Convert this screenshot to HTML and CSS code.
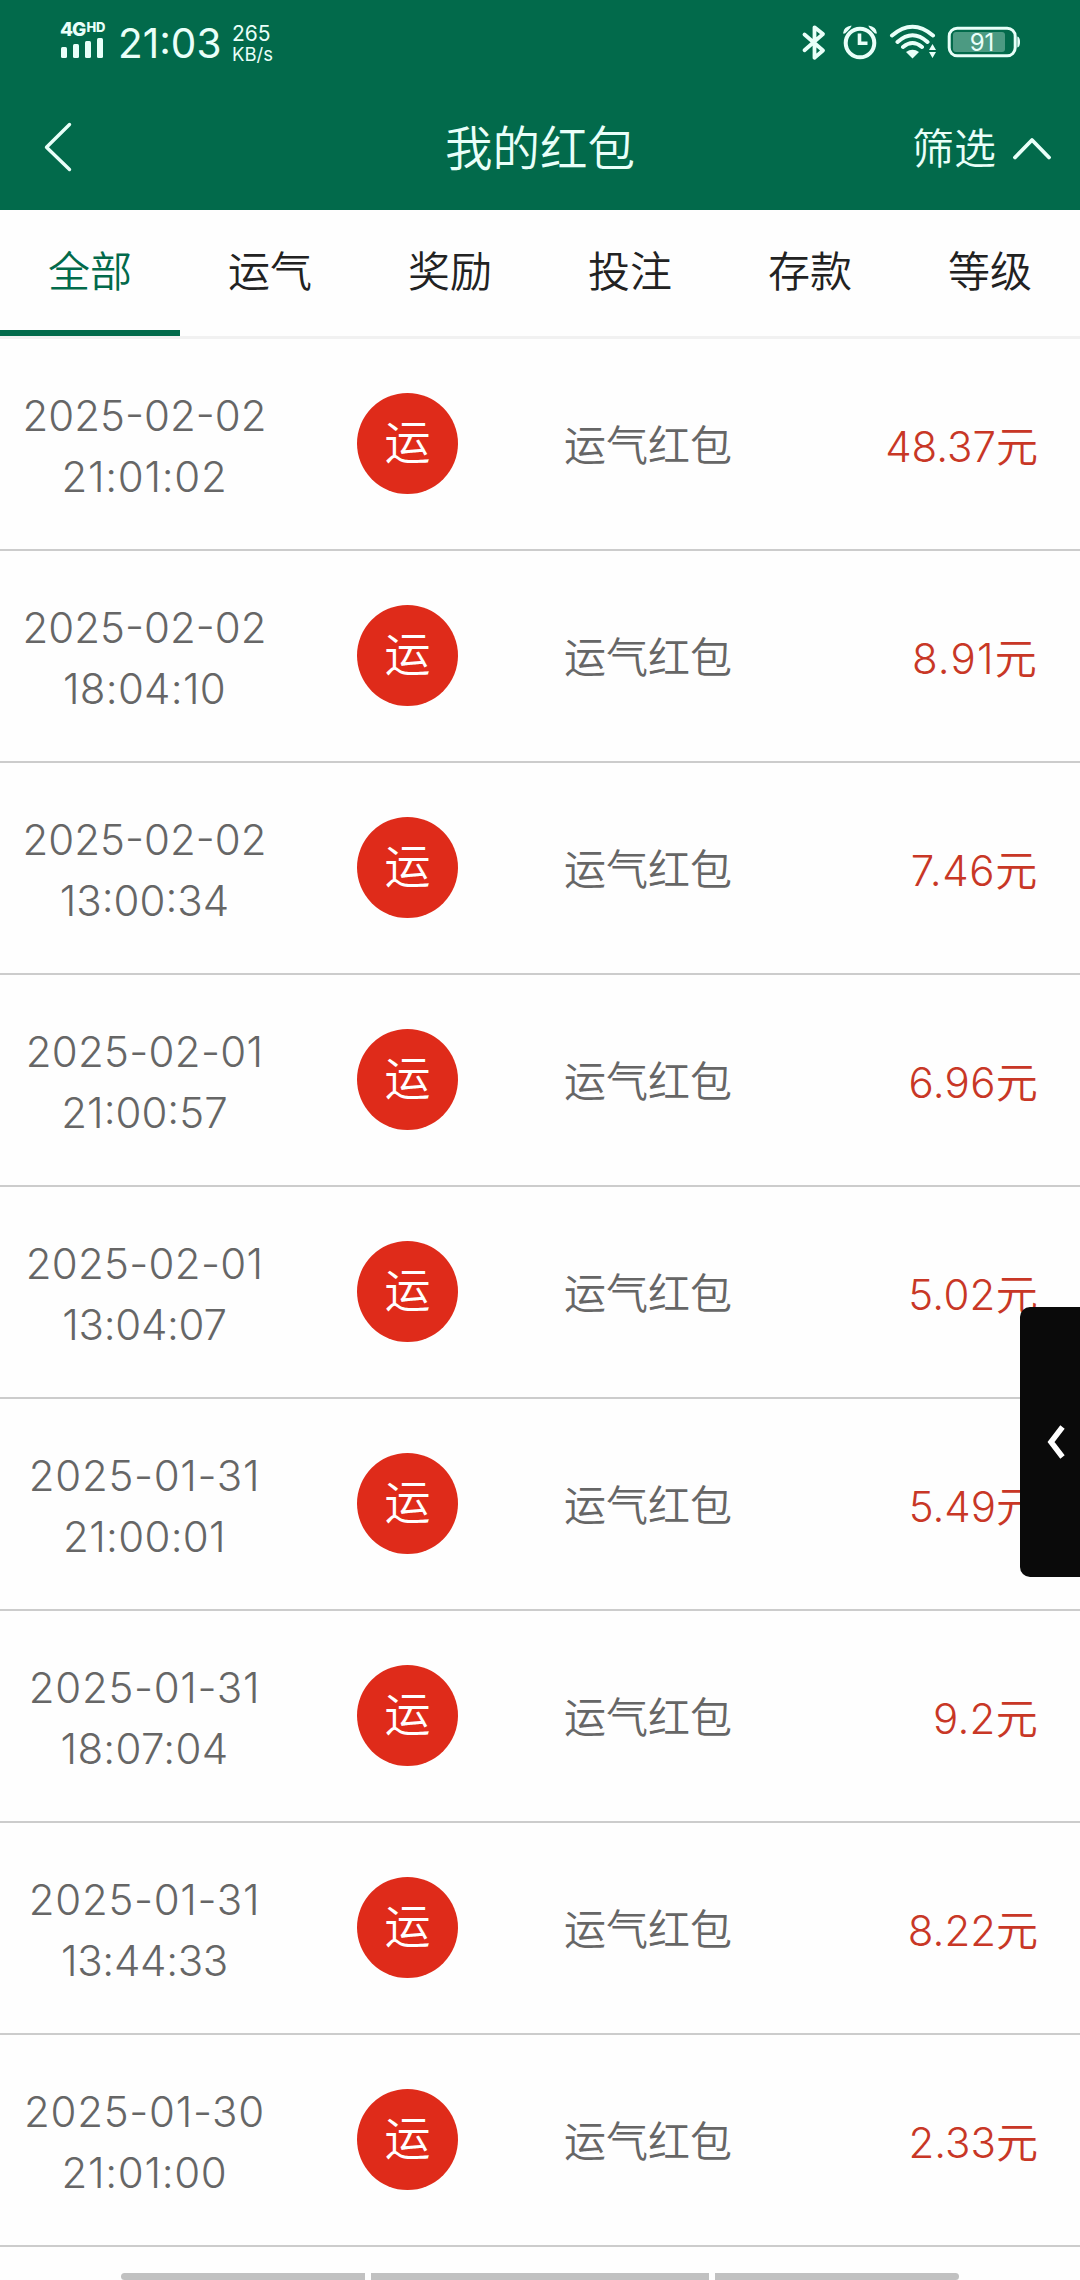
FILE: index.html
```
<!DOCTYPE html>
<html lang="zh-CN">
<head>
<meta charset="utf-8">
<title>我的红包</title>
<link rel="stylesheet" href="styles.css">
</head>
<body>
<div class="screen">
  <header class="top">
    <div class="status">
      <div class="signal">
        <div class="net">4G<span class="hd">HD</span></div>
        <svg class="bars" width="44" height="20" viewBox="0 0 44 20" fill="currentColor"><rect x="0" y="9" width="6" height="11" rx="1.5"/><rect x="12" y="6" width="6" height="14" rx="1.5"/><rect x="24" y="3" width="6" height="17" rx="1.5"/><rect x="36" y="0" width="6" height="20" rx="1.5"/></svg>
      </div>
      <div class="clock">21:03</div>
      <div class="speed"><span class="rate">265</span><span class="unit">KB/s</span></div>
      <svg class="icons" width="230" height="40" viewBox="796 22 230 40" fill="none" stroke="currentColor">
        <path d="M804.5 34.5 823 50.500 814.500 57.700V27.300L823 34 804.500 50.300" stroke-width="3.800" stroke-linejoin="round" stroke-linecap="round"/>
        <circle cx="860" cy="43" r="14.300" stroke-width="4"/>
        <path d="M859.500 33.500V43.300H867.500" stroke-width="3.600"/>
        <path d="M843 33.500Q843.500 26.500 851.500 25.500Q852 27 845 33.500ZM877 33.500Q876.500 26.500 868.500 25.500Q868 27 875 33.500Z" fill="currentColor" stroke="none"/>
        <path d="M892 35.500Q912.500 18 933 35.500M897.500 42Q912.500 28.500 927.500 42M903 47Q912.500 39 922 47" stroke-width="4" stroke-linecap="round"/>
        <path d="M906 52Q912.500 47.500 919 52L912.500 58.500Z" fill="currentColor" stroke="none"/>
        <path d="M932.500 44 936 50H929ZM932.500 58 936 52H929Z" fill="currentColor" stroke="none"/>
        <rect x="949.200" y="28.200" width="66" height="27.600" rx="8" stroke-width="3"/>
        <rect x="953" y="32" width="52" height="20" rx="3" fill="currentColor" fill-opacity=".32" stroke="none"/>
        <path d="M1017.300 36.500Q1020 37 1020 42T1017.300 47.500Z" fill="currentColor" stroke="none"/>
        <text class="battery" x="982" y="51" text-anchor="middle">91</text>
      </svg>
    </div>
    <div class="nav">
      <svg class="back" width="30" height="50" viewBox="0 0 30 50"><path d="M26.500 2.500 3.500 25.200 26.500 47.500"/></svg>
      <h1 class="title">我的红包</h1>
      <div class="filter"><span>筛选</span><svg width="38" height="24" viewBox="0 0 38 24"><path d="M2 20.500 19 3 36 20.500"/></svg></div>
    </div>
  </header>
  <nav class="tabs">
    <span class="tab active">全部</span><span class="tab">运气</span><span class="tab">奖励</span><span class="tab">投注</span><span class="tab">存款</span><span class="tab">等级</span>
  </nav>
  <main class="list">
    <div class="row"><div class="date"><span>2025-02-02</span><span class="wide">21:01:02</span></div><div class="badge">运</div><div class="name">运气红包</div><div class="amount">48.37元</div></div>
    <div class="row"><div class="date"><span>2025-02-02</span><span class="loose">18:04:10</span></div><div class="badge">运</div><div class="name">运气红包</div><div class="amount wider">8.91元</div></div>
    <div class="row"><div class="date"><span>2025-02-02</span><span>13:00:34</span></div><div class="badge">运</div><div class="name">运气红包</div><div class="amount wide">7.46元</div></div>
    <div class="row"><div class="date"><span class="loose">2025-02-01</span><span>21:00:57</span></div><div class="badge">运</div><div class="name">运气红包</div><div class="amount loose">6.96元</div></div>
    <div class="row"><div class="date"><span class="loose">2025-02-01</span><span class="tight">13:04:07</span></div><div class="badge">运</div><div class="name">运气红包</div><div class="amount loose">5.02元</div></div>
    <div class="row"><div class="date"><span class="wide">2025-01-31</span><span class="loose">21:00:01</span></div><div class="badge">运</div><div class="name">运气红包</div><div class="amount">5.49元</div></div>
    <div class="row"><div class="date"><span class="wide">2025-01-31</span><span class="loose">18:07:04</span></div><div class="badge">运</div><div class="name">运气红包</div><div class="amount loose">9.2元</div></div>
    <div class="row"><div class="date"><span class="wide">2025-01-31</span><span class="tight">13:44:33</span></div><div class="badge">运</div><div class="name">运气红包</div><div class="amount">8.22元</div></div>
    <div class="row"><div class="date"><span class="wide">2025-01-30</span><span class="wide">21:01:00</span></div><div class="badge">运</div><div class="name">运气红包</div><div class="amount">2.33元</div></div>
  </main>
  <aside class="drawer"><svg width="18" height="36" viewBox="0 0 18 36"><path d="M15.500 3 4 18 15.500 33"/></svg></aside>
  <div class="gesture"><i></i><i></i><i></i></div>
</div>
</body>
</html>
```
FILE: styles.css
```
* { box-sizing: border-box; }
body { margin: 0; background: #fff; }
.screen {
  position: relative;
  width: 1080px;
  height: 2280px;
  overflow: hidden;
  background: #fefefe;
  font-family: Inter, "Noto Sans CJK SC", sans-serif;
  font-weight: 350;
  font-size: 42px;
  color: #222;
}
.top { height: 210px; background: #026a4b; color: #e9fff9; }
.status { height: 84px; display: flex; align-items: flex-start; padding: 22px 54px 0 60px; }
.signal { width: 58px; height: 36px; display: flex; flex-direction: column; justify-content: space-between; }
.net { display: flex; font-size: 19px; line-height: 15px; font-weight: 800; letter-spacing: -1px; }
.hd { font-size: 13px; line-height: 11px; letter-spacing: 0; margin-left: 1px; }
.bars { margin-left: 1px; flex: none; }
.clock { width: 114px; font-size: 40.5px; line-height: 44px; font-weight: 400; }
.speed { display: flex; flex-direction: column; font-weight: 400; }
.rate { font-size: 21px; line-height: 24px; }
.unit { font-size: 18.5px; line-height: 17px; }
.icons { margin-left: auto; flex: none; }
.battery { font-size: 24px; font-weight: 400; fill: currentColor; stroke: none; }
.nav { height: 126px; display: grid; grid-template-columns: 1fr auto 1fr; align-items: start; padding: 38px 29px 0; }
.back { margin-left: 14px; fill: none; stroke: currentColor; stroke-width: 3.4; stroke-linecap: round; stroke-linejoin: round; }
.title { margin: 0; font-size: 47.5px; line-height: 54px; font-weight: 350; }
.filter { display: flex; align-items: center; justify-content: flex-end; gap: 17px; line-height: 54px; }
.filter svg { fill: none; stroke: currentColor; stroke-width: 3.8; stroke-linecap: round; stroke-linejoin: round; }
.tabs { height: 129px; display: grid; grid-template-columns: repeat(6, 1fr); border-bottom: 3px solid #f1f1f1; }
.tab { height: 126px; text-align: center; line-height: 124px; border-bottom: 6px solid transparent; }
.tab.active { color: #026a4b; border-color: #026a4b; }
.row { height: 212px; display: grid; grid-template-columns: 290px 235px 246px 267px; align-items: center; border-bottom: 2px solid #ccc; }
.date { display: flex; flex-direction: column; align-items: center; line-height: 61px; color: #666; padding: 4px 1px 0 0; font-weight: 300; }
.tight { letter-spacing: -0.3px; }
.loose { letter-spacing: 0.3px; }
.wide { letter-spacing: 0.7px; }
.wider { letter-spacing: 1.2px; }
.badge { width: 101px; height: 101px; margin: -2px 0 0 67px; border-radius: 50%; background: #df2b1a; color: #fff; font-size: 46px; line-height: 98px; text-align: center; }
.name { text-align: center; color: #666; padding-bottom: 3px; }
.amount { text-align: right; color: #c83726; white-space: nowrap; padding-bottom: 2px; }
.drawer { position: absolute; right: 0; top: 1307px; width: 60px; height: 270px; display: flex; align-items: center; padding-left: 27px; border-radius: 10px 0 0 10px; background: #0a0a0a; }
.drawer svg { fill: none; stroke: #fff; stroke-width: 5.5; }
.gesture { position: absolute; left: 121px; right: 121px; bottom: 0; height: 7px; display: grid; grid-template-columns: 244px 338px 244px; gap: 6px; }
.gesture i { background: #c1c1c1; }
.gesture i:first-child { border-radius: 4px 0 0 4px; }
.gesture i:last-child { border-radius: 0 4px 4px 0; }
```
